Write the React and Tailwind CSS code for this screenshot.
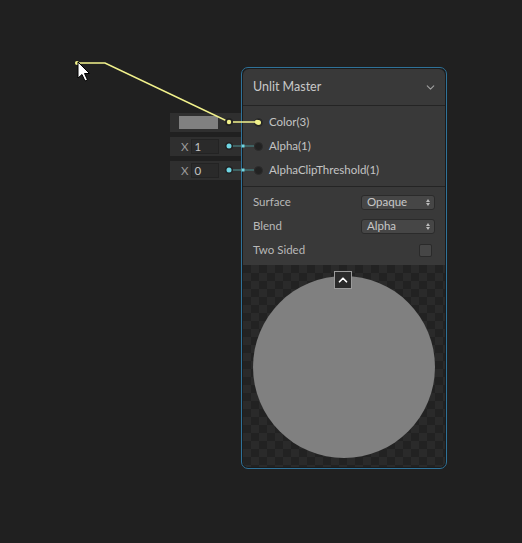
import { ChevronDown, ChevronUp } from 'lucide-react';

const font = { fontFamily: 'Lato, "Noto Sans", sans-serif' };

const PortRow = ({ label, active }) => (
  <div className="flex items-center h-6 pl-[11px]">
    <div className="w-[9px] h-[9px] rounded-full bg-[#222] border border-[#2c2c2c] flex items-center justify-center">
      {active && <div className="w-[5px] h-[5px] rounded-full bg-[#f3f38a]" />}
    </div>
    <span className="ml-[6px] text-[11.5px] text-[#c4c4c4]">{label}</span>
  </div>
);

const Dropdown = ({ value }) => (
  <div className="w-[74px] h-[15px] rounded-[3px] bg-[#464646] border border-[#2b2b2b] flex items-center justify-between pl-[5px] pr-[4px]">
    <span className="text-[11.5px] leading-none text-[#c8c8c8]">{value}</span>
    <span className="flex flex-col items-center gap-[1px]">
      <span className="block w-0 h-0 border-l-[2px] border-r-[2px] border-b-[3px] border-l-transparent border-r-transparent border-b-[#bbb]" />
      <span className="block w-0 h-0 border-l-[2px] border-r-[2px] border-t-[3px] border-l-transparent border-r-transparent border-t-[#bbb]" />
    </span>
  </div>
);

const SettingRow = ({ label, children }) => (
  <div className="flex items-center justify-between h-6 pl-[10px] pr-[10px]">
    <span className="text-[11.5px] text-[#b8b8b8]">{label}</span>
    {children}
  </div>
);

const VectorInput = ({ value }) => (
  <div className="flex items-center h-[19px] w-[72px] bg-[#2f2f2f] pl-[11px]">
    <span className="text-[11.5px] text-[#9a9a9a]">X</span>
    <div className="ml-[3px] w-[28px] h-[15px] bg-[#2a2a2a] border border-[#232323] flex items-center pl-[2px]">
      <span className="text-[11.5px] leading-none text-[#c4c4c4]">{value}</span>
    </div>
  </div>
);

export default function App() {
  return (
    <div className="relative w-[522px] h-[543px] bg-[#202020] overflow-hidden" style={font}>
      {/* external inputs */}
      <div className="absolute left-[170px] top-[113px] flex flex-col gap-[5px]">
        <div className="flex items-center h-[19px] w-[72px] bg-[#2f2f2f] pl-[9px]">
          <div className="w-[39px] h-[13px] bg-[#808080]" />
        </div>
        <VectorInput value="1" />
        <VectorInput value="0" />
      </div>

      {/* node */}
      <div className="absolute left-[241px] top-[67px] w-[206px] h-[402px] rounded-[7px] border border-[#2f7299] bg-[#1b1b1b] p-px">
        <div className="w-full h-full rounded-[6px] bg-[#393939] overflow-hidden flex flex-col">
          <div className="flex items-center justify-between h-[37px] pl-[10px] pr-[8px] border-b border-[#242424]">
            <span className="text-[12.5px] text-[#c8c8c8]">Unlit Master</span>
            <ChevronDown size={13} strokeWidth={2} className="text-[#a0a0a0]" />
          </div>
          <div className="flex flex-col pt-[4px] pb-[4px] border-b border-[#242424]">
            <PortRow label="Color(3)" active />
            <PortRow label="Alpha(1)" />
            <PortRow label="AlphaClipThreshold(1)" />
          </div>
          <div className="flex flex-col pt-[3px] pb-[3px]">
            <SettingRow label="Surface">
              <Dropdown value="Opaque" />
            </SettingRow>
            <SettingRow label="Blend">
              <Dropdown value="Alpha" />
            </SettingRow>
            <SettingRow label="Two Sided">
              <div className="w-[13px] h-[13px] mr-[3px] rounded-[2px] bg-[#464646] border border-[#2a2a2a]" />
            </SettingRow>
          </div>
          <div className="relative flex-1 bg-[conic-gradient(#2a2a2a_25%,#222222_0_50%,#2a2a2a_0_75%,#222222_0)] bg-[length:16px_16px] flex items-center justify-center">
            <div className="w-[182px] h-[182px] rounded-full bg-[#808080] mt-[2px]" />
            <div className="absolute top-[6px] left-[91px] w-[18px] h-[18px] bg-[#2a2a2a] border border-[#9a9a9a] flex items-center justify-center">
              <ChevronUp size={14} strokeWidth={3} className="text-white" />
            </div>
          </div>
        </div>
      </div>

      {/* wires */}
      <svg className="absolute left-0 top-0" width="522" height="543">
        <polyline points="77,63 105,63 229,122 257,122" fill="none" stroke="#f2f28c" strokeWidth="1.6" />
        <circle cx="77" cy="63" r="2" fill="#f2f28c" />
        <circle cx="229" cy="122" r="4" fill="#222" />
        <circle cx="229" cy="122" r="2.2" fill="#f2f28c" />
        <circle cx="257" cy="122" r="2.2" fill="#f2f28c" />
        <line x1="229" y1="146" x2="254" y2="146" stroke="#3f6263" strokeWidth="2" />
        <line x1="229" y1="170" x2="254" y2="170" stroke="#3f6263" strokeWidth="2" />
        <rect x="241.5" y="144.5" width="3" height="3" fill="#6fd6e4" />
        <rect x="241.5" y="168.5" width="3" height="3" fill="#6fd6e4" />
        <circle cx="229" cy="146" r="4" fill="#222" />
        <circle cx="229" cy="146" r="2.5" fill="#6fd6e4" />
        <circle cx="229" cy="170" r="4" fill="#222" />
        <circle cx="229" cy="170" r="2.5" fill="#6fd6e4" />
        {/* cursor */}
        <path d="M78 62 L78 78 L82 74.5 L85 81 L87.5 80 L84.5 73.5 L89.5 73.5 Z" fill="#fff" stroke="#000" strokeWidth="1" strokeLinejoin="round" />
      </svg>
    </div>
  );
}
